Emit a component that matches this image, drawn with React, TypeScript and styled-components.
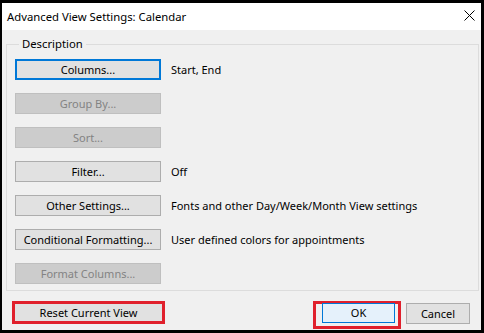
import React from "react";
import styled, { createGlobalStyle, css } from "styled-components";

const GlobalStyle = createGlobalStyle`
  html, body {
    margin: 0;
    padding: 0;
    background: #000;
  }
  body {
    font-family: "Noto Sans", "Open Sans", sans-serif;
    font-size: 11px;
    color: #000;
  }
  * {
    box-sizing: border-box;
  }
`;

type Row = {
  label: string;
  info?: string;
  disabled?: boolean;
  focused?: boolean;
};

const rows: Row[] = [
  { label: "Columns...", info: "Start, End", focused: true },
  { label: "Group By...", disabled: true },
  { label: "Sort...", disabled: true },
  { label: "Filter...", info: "Off" },
  { label: "Other Settings...", info: "Fonts and other Day/Week/Month View settings" },
  { label: "Conditional Formatting...", info: "User defined colors for appointments" },
  { label: "Format Columns...", disabled: true },
];

export default function App() {
  return (
    <>
      <GlobalStyle />
      <Dialog>
        <TitleBar>
          <Title>Advanced View Settings: Calendar</Title>
          <CloseIcon width="11" height="11" viewBox="0 0 11 11">
            <path d="M0.5 0.5 L10.5 10.5 M10.5 0.5 L0.5 10.5" stroke="#000" strokeWidth="1" />
          </CloseIcon>
        </TitleBar>
        <Body>
          <GroupBox>
            <Legend>Description</Legend>
            <RowList>
              {rows.map((row) => (
                <SettingRow key={row.label}>
                  <DialogButton $disabled={row.disabled} $focused={row.focused}>
                    {row.label}
                  </DialogButton>
                  {row.info && <Info>{row.info}</Info>}
                </SettingRow>
              ))}
            </RowList>
          </GroupBox>
          <Footer>
            <ResetMark>
              <ResetButton>Reset Current View</ResetButton>
            </ResetMark>
            <Spacer />
            <OkMark>
              <OkButton>OK</OkButton>
            </OkMark>
            <CancelButton>Cancel</CancelButton>
          </Footer>
        </Body>
      </Dialog>
    </>
  );
}

const Dialog = styled.div`
  width: 484px;
  height: 333px;
  border: 3px solid #000;
  border-left-width: 2px;
  background: #f0f0f0;
  display: flex;
  flex-direction: column;
  overflow: hidden;
`;

const TitleBar = styled.div`
  height: 27px;
  background: #fff;
  display: flex;
  align-items: center;
  justify-content: space-between;
  padding: 0 6px 0 5px;
  flex-shrink: 0;
`;

const Title = styled.span`
  font-size: 11.3px;
  margin-top: -1px;
`;

const CloseIcon = styled.svg`
  display: block;
  margin-top: -2px;
`;

const Body = styled.div`
  flex: 1;
  padding: 6px 2px 0 4px;
  display: flex;
  flex-direction: column;
`;

const GroupBox = styled.fieldset`
  margin: 0;
  padding: 7px 8px 6px 8px;
  border: 1px solid #dcdcdc;
  min-width: 0;
`;

const Legend = styled.legend`
  padding: 0 3px;
  margin-left: 4px;
  font-size: 11.3px;
  line-height: 16px;
`;

const RowList = styled.div`
  display: flex;
  flex-direction: column;
  gap: 13px;
`;

const SettingRow = styled.div`
  display: flex;
  align-items: center;
  gap: 10px;
  height: 21px;
`;

const Info = styled.span`
  white-space: nowrap;
`;

const buttonBase = css`
  font-family: inherit;
  font-size: 11px;
  color: #000;
  background: #e1e1e1;
  border: 1px solid #adadad;
  padding: 0 0 1px;
  margin: 0;
  white-space: nowrap;
  display: flex;
  align-items: center;
  justify-content: center;
`;

const DialogButton = styled.button<{ $disabled?: boolean; $focused?: boolean }>`
  ${buttonBase}
  width: 146px;
  height: 21px;
  ${(p) =>
    p.$focused &&
    css`
      border: 2px solid #0078d7;
    `}
  ${(p) =>
    p.$disabled &&
    css`
      background: #cccccc;
      border-color: #bfbfbf;
      color: #838383;
    `}
`;

const Footer = styled.div`
  display: flex;
  align-items: flex-start;
  padding: 10px 9px 0 6px;
`;

const Spacer = styled.div`
  flex: 1;
`;

const ResetMark = styled.div`
  border: 3px solid #e0202c;
`;

const ResetButton = styled.button`
  ${buttonBase}
  width: 147px;
  height: 17px;
  border: none;
`;

const OkMark = styled.div`
  border: 3px solid #e0202c;
  padding: 0 3px 3px 6px;
  margin-right: 5px;
`;

const OkButton = styled.button`
  ${buttonBase}
  width: 73px;
  height: 20px;
  background: #e5f1fb;
  border-color: #0078d7;
  margin-top: -1px;
`;

const CancelButton = styled.button`
  ${buttonBase}
  width: 64px;
  height: 21px;
  margin-top: 2px;
`;
